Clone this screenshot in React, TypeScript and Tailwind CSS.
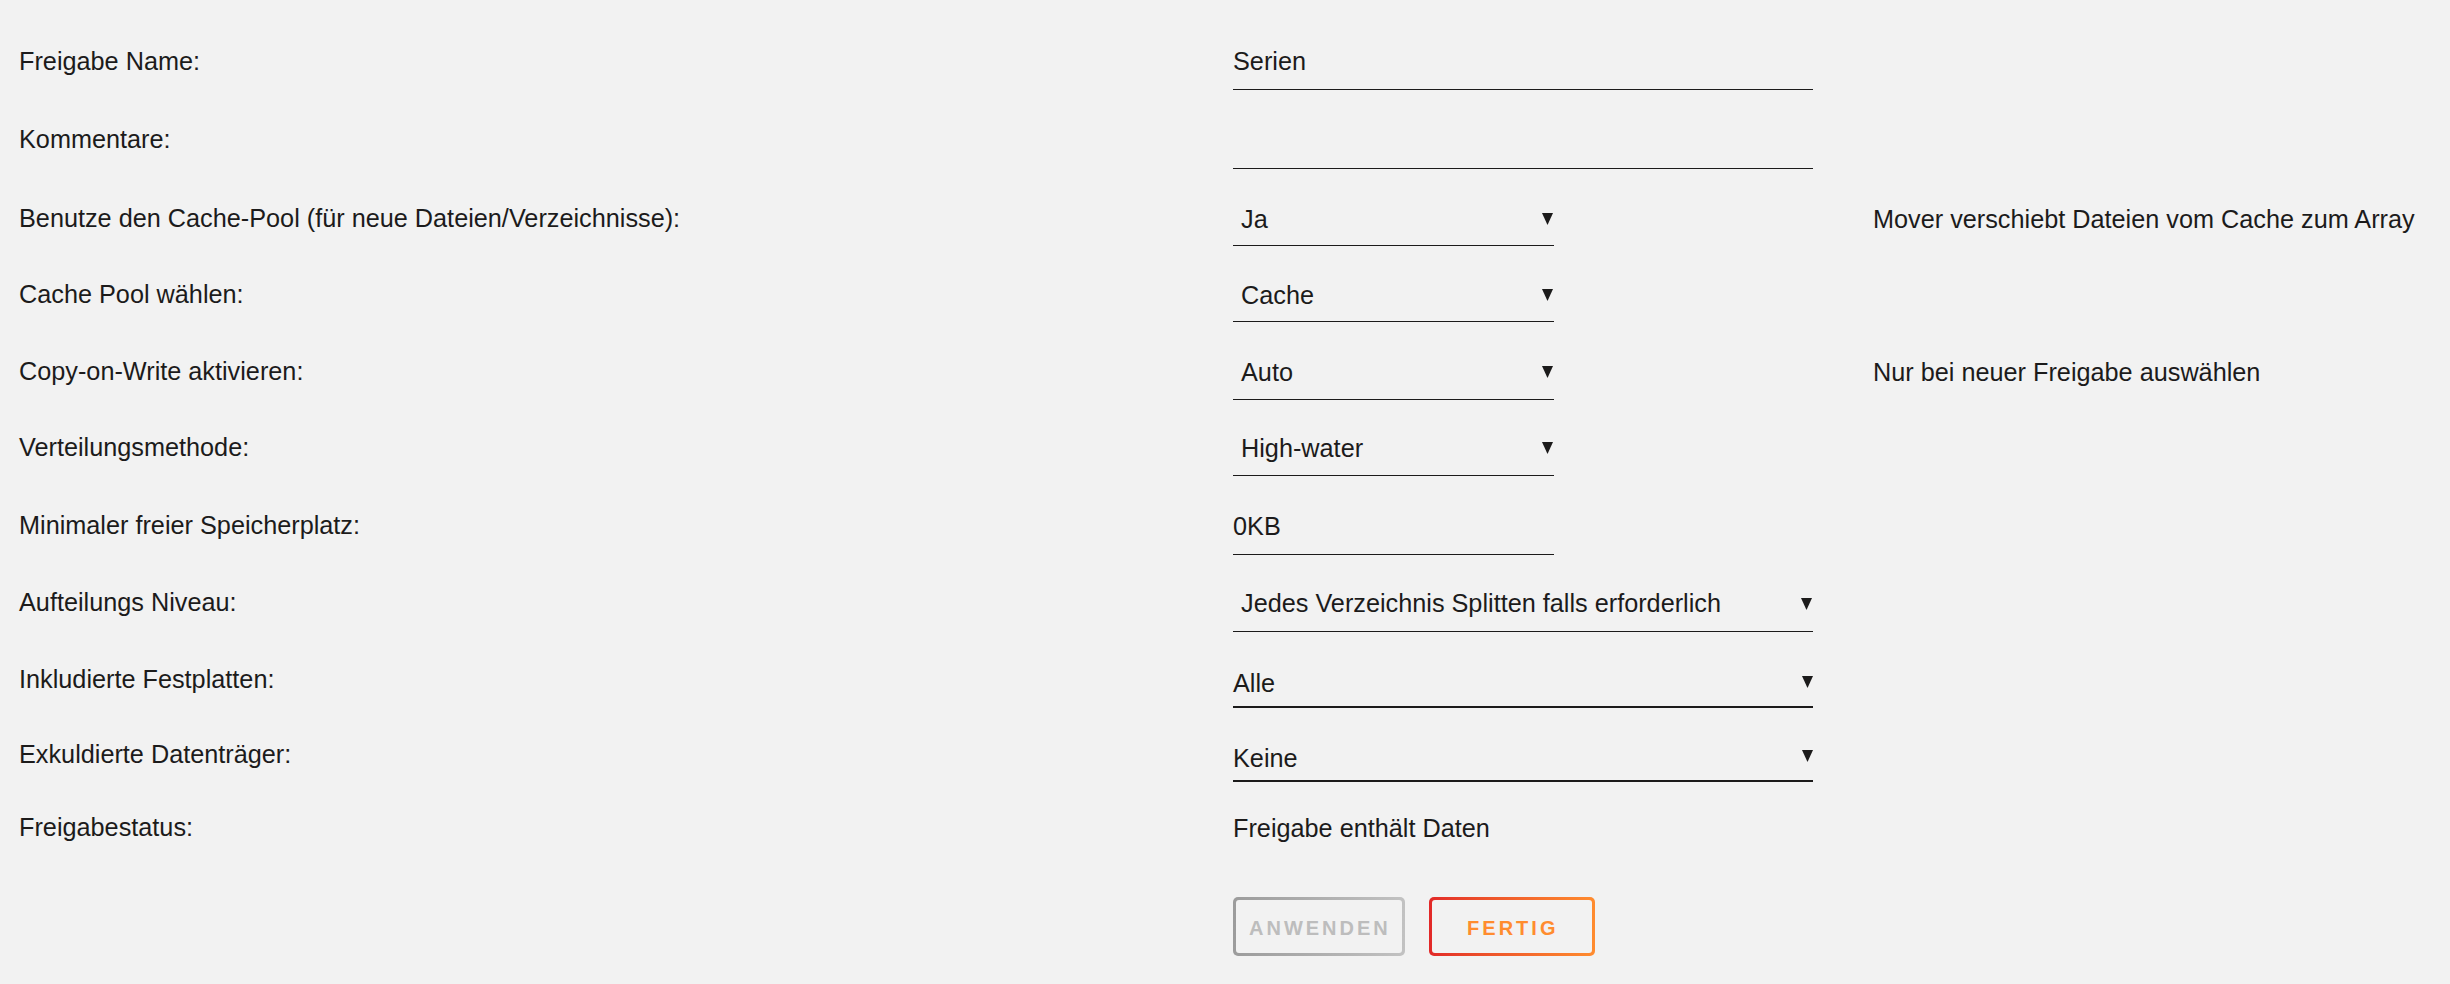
import type { ReactNode } from 'react';

type Row = {
  label: string;
  h: string;
  control: ReactNode;
  hint?: string;
};

function Arrow({ className }: { className: string }) {
  return (
    <svg viewBox="0 0 11 12" className={`h-[12px] w-[11px] shrink-0 fill-[#1c1b1b] ${className}`} aria-hidden>
      <polygon points="0,0 11,0 5.5,12" />
    </svg>
  );
}

function TextField({ value, width, className }: { value?: string; width: string; className: string }) {
  return (
    <div className={`${width} h-[30px] box-content border-b border-[#1c1b1b] ${className}`}>{value}</div>
  );
}

function Select({
  value,
  width,
  className,
  arrow,
}: {
  value: string;
  width: string;
  className: string;
  arrow: string;
}) {
  return (
    <div className={`${width} flex items-start border-b border-[#1c1b1b] pr-[1px] ${className}`}>
      <span className="flex-1 pl-[8px]">{value}</span>
      <Arrow className={arrow} />
    </div>
  );
}

function Dropdown({ value, className, arrow }: { value: string; className: string; arrow: string }) {
  return (
    <div className={`w-[580px] flex items-start border-b-2 border-[#1c1b1b] ${className}`}>
      <span className="flex-1">{value}</span>
      <Arrow className={arrow} />
    </div>
  );
}

const rows: Row[] = [
  {
    label: 'Freigabe Name:',
    h: 'h-[78px]',
    control: <TextField value="Serien" width="w-[580px]" className="pb-[13px]" />,
  },
  {
    label: 'Kommentare:',
    h: 'h-[79px]',
    control: <TextField width="w-[580px]" className="pb-[14px]" />,
  },
  {
    label: 'Benutze den Cache-Pool (für neue Dateien/Verzeichnisse):',
    h: 'h-[76px]',
    control: <Select value="Ja" width="w-[321px]" className="pt-[1px] pb-[11px]" arrow="mt-[9px]" />,
    hint: 'Mover verschiebt Dateien vom Cache zum Array',
  },
  {
    label: 'Cache Pool wählen:',
    h: 'h-[77px]',
    control: <Select value="Cache" width="w-[321px]" className="pt-[1px] pb-[11px]" arrow="mt-[9px]" />,
  },
  {
    label: 'Copy-on-Write aktivieren:',
    h: 'h-[76px]',
    control: <Select value="Auto" width="w-[321px]" className="pt-[1px] pb-[12px]" arrow="mt-[9px]" />,
    hint: 'Nur bei neuer Freigabe auswählen',
  },
  {
    label: 'Verteilungsmethode:',
    h: 'h-[78px]',
    control: <Select value="High-water" width="w-[321px]" className="pt-[1px] pb-[12px]" arrow="mt-[9px]" />,
  },
  {
    label: 'Minimaler freier Speicherplatz:',
    h: 'h-[77px]',
    control: <TextField value="0KB" width="w-[321px]" className="pt-[1px] pb-[13px]" />,
  },
  {
    label: 'Aufteilungs Niveau:',
    h: 'h-[77px]',
    control: (
      <Select
        value="Jedes Verzeichnis Splitten falls erforderlich"
        width="w-[580px]"
        className="pt-[1px] pb-[13px]"
        arrow="mt-[10px]"
      />
    ),
  },
  {
    label: 'Inkludierte Festplatten:',
    h: 'h-[75px]',
    control: <Dropdown value="Alle" className="pt-[4px] pb-[8px]" arrow="mt-[8px]" />,
  },
  {
    label: 'Exkuldierte Datenträger:',
    h: 'h-[73px]',
    control: <Dropdown value="Keine" className="pt-[4px] pb-[7px]" arrow="mt-[7px]" />,
  },
  {
    label: 'Freigabestatus:',
    h: 'h-[85px]',
    control: <div className="pt-[1px]">Freigabe enthält Daten</div>,
  },
];

export default function App() {
  return (
    <main className="min-h-screen bg-[#f2f2f2] text-[#1c1b1b] font-['Liberation_Sans',Arial,sans-serif] text-[25.25px] leading-[30px]">
      <form className="pl-[19px] pt-[46px]" onSubmit={(e) => e.preventDefault()}>
        {rows.map((row) => (
          <div key={row.label} className={`flex items-start ${row.h}`}>
            <div className="w-[1214px] shrink-0">{row.label}</div>
            <div className="w-[640px] shrink-0">{row.control}</div>
            {row.hint && <div className="pt-[1px] whitespace-nowrap">{row.hint}</div>}
          </div>
        ))}

        <div className="flex">
          <div className="w-[1214px] shrink-0" />
          <div className="flex gap-[24px]">
            <div className="h-[59px] min-w-[166px] rounded-[5px] bg-linear-to-r from-[#9c9c9c] to-[#c2c2c2] p-[3px]">
              <button
                type="button"
                disabled
                className="flex h-full w-full items-center justify-center rounded-[3px] bg-[#f2f2f2] pt-[2px] pl-[13px] pr-[11px] text-[20px] leading-[20px] font-bold tracking-[3px] text-[#bdbdbd]"
              >
                ANWENDEN
              </button>
            </div>
            <div className="h-[59px] min-w-[166px] rounded-[5px] bg-linear-to-r from-[#e22828] to-[#ff8c2f] p-[3px]">
              <button
                type="button"
                className="flex h-full w-full items-center justify-center rounded-[3px] bg-[#f2f2f2] pt-[2px] pl-[13px] pr-[11px] text-[20px] leading-[20px] font-bold tracking-[3px] text-[#ff8c2f]"
              >
                FERTIG
              </button>
            </div>
          </div>
        </div>
      </form>
    </main>
  );
}
